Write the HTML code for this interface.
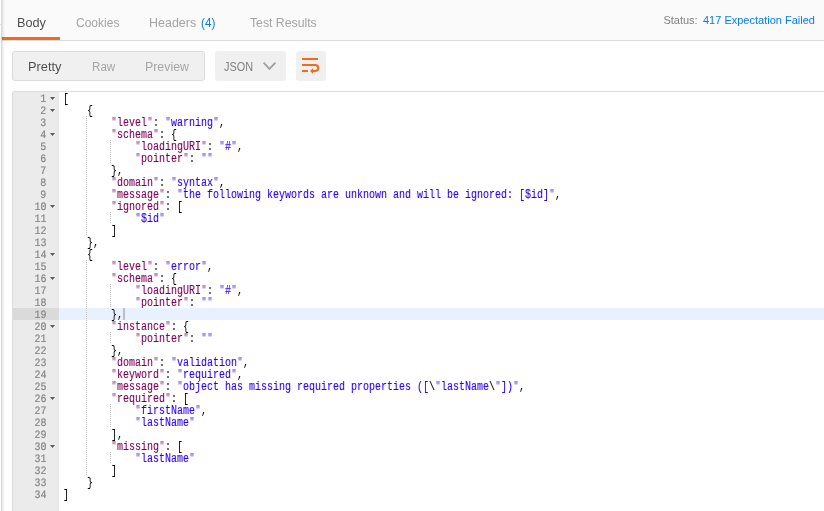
<!DOCTYPE html>
<html><head><meta charset="utf-8"><title>Response</title>
<style>
*{box-sizing:border-box;margin:0;padding:0}
html,body{width:824px;height:511px;overflow:hidden;background:#fff}
body{position:relative;font-family:"Liberation Sans","DejaVu Sans",sans-serif;font-size:13px;color:#808080}
.edge{position:absolute;left:0;top:0;width:6px;height:511px;background:linear-gradient(90deg,#fff 0,#fff 1px,rgba(0,0,0,.15) 1px,rgba(0,0,0,.15) 2px,rgba(0,0,0,.09) 2px,rgba(0,0,0,.09) 3px,rgba(0,0,0,.04) 3px,rgba(0,0,0,.04) 4px,rgba(0,0,0,.015) 4px,rgba(0,0,0,.015) 5px,transparent 5px)}
.edge i{position:absolute;left:0;top:24px;width:1px;height:1px;background:#e4e4e4}
.tabs{position:absolute;left:2px;top:0;width:822px;height:41px;background:#fafafa;border-bottom:1px solid #dddddd}
.tab{position:absolute;top:15px;transform-origin:0 0;line-height:16px;font-size:13px;color:#a4a4a4;white-space:nowrap}
.tab.on{color:#505050}
.tab i{font-style:normal;color:#097bed}
.bar{position:absolute;left:0;top:37px;width:58px;height:3px;background:#f26b1d}
.status{position:absolute;top:13px;line-height:14px;font-size:11px;white-space:nowrap}
.status.v{color:#097bed}
.grp{position:absolute;left:12px;top:51px;width:193px;height:30px;background:#f0f0f0;border:1px solid #dcdcdc;border-radius:3px}
.grp span{position:absolute;transform-origin:0 0;top:7px;line-height:16px;font-size:12px;color:#a6a6a6;white-space:nowrap}
.grp span.on{color:#505050}
.dd{position:absolute;left:215px;top:51px;width:71px;height:30px;background:#f0f0f0;border-radius:3px}
.dd span{position:absolute;left:9.4px;top:8px;line-height:16px;font-size:12px;color:#808080;transform:scaleX(.906);transform-origin:0 0}
.dd svg{position:absolute;left:47px;top:9.6px}
.wrap{position:absolute;left:296px;top:51px;width:30px;height:30px;background:#f0f0f0;border-radius:3px}
.wrap svg{position:absolute;left:0;top:0}
.ed{position:absolute;left:12px;top:91px;width:812px;height:420px;border-top:1px solid #dddddd;border-left:1px solid #dddddd;border-top-left-radius:3px;overflow:hidden;background:#fff}
.gut{position:absolute;left:0;top:0;width:46px;height:420px;background:#ebebeb}
.g{position:relative;height:12px;line-height:12px;font-family:"Liberation Mono","DejaVu Sans Mono",monospace;font-size:12px;color:#848484}
.g.act{background:#dadada}
.g .n{position:absolute;right:13px;top:.5px;display:inline-block;text-rendering:geometricPrecision;-webkit-text-stroke:.2px currentColor;transform:scale(.83333,.95);transform-origin:100% 10px;white-space:pre}
.g b{position:absolute;left:37px;top:5px;width:5px;height:3px;background:#5a5a5a;clip-path:polygon(0 0,100% 0,50% 100%)}
.code{position:absolute;left:46px;top:0;width:766px;height:420px}
.l{position:relative;height:12px;line-height:12px;padding-left:4px;font-family:"Liberation Mono","DejaVu Sans Mono",monospace;font-size:12px;color:#000;white-space:pre}
.l.act{background:#e8f2fe}
.l>span{position:relative;top:1px;display:inline-block;transform:scaleX(.83333);transform-origin:0 10px;white-space:pre;vertical-align:top}
.l u{position:absolute;top:0;width:1px;height:12px;margin-left:4px;text-decoration:none;background:repeating-linear-gradient(180deg,#bfbfbf 0,#bfbfbf 1px,transparent 1px,transparent 2px)}
k{color:#7f0055}
s{color:#2a00ff;text-decoration:none}
e{color:#000}
.cur{position:absolute;left:64px;top:0;width:2px;height:12px;background:rgba(0,0,0,.21)}

.tabs,.grp,.dd,.gut,.code{will-change:transform}
k,s,e{-webkit-text-stroke:.12px currentColor}
.l b{display:inline-block;width:7.2px;font-size:10px;font-weight:normal;text-align:center;position:relative;top:-1.5px;opacity:.8}

</style></head><body>
<div class="tabs">
<div class="bar"></div>
<div class="tab on" style="left:14.9px;transform:scaleX(.975)">Body</div>
<div class="tab" style="left:73.9px;transform:scaleX(.925)">Cookies</div>
<div class="tab" style="left:146.7px;transform:scaleX(.96)">Headers</div>
<div class="tab" style="left:198.7px;transform:scaleX(.90)"><i>(4)</i></div>
<div class="tab" style="left:248.3px;transform:scaleX(.942)">Test Results</div>
<div class="status" style="left:661.4px">Status:</div>
<div class="status v" style="left:701px">417 Expectation Failed</div>
</div>
<div class="grp"><span class="on" style="left:15px;transform:scaleX(1.065)">Pretty</span><span style="left:78.8px;transform:scaleX(.968)">Raw</span><span style="left:132px;transform:scaleX(1.03)">Preview</span></div>
<div class="dd"><span>JSON</span><svg width="16" height="10" viewBox="0 0 16 10"><path d="M1.6 1.7 L7.5 7.9 L13.4 1.7" fill="none" stroke="#a0a0a0" stroke-width="1.8"/></svg></div>
<div class="wrap"><svg width="30" height="30" viewBox="0 0 30 30"><path d="M6 8H22M6 14H19.2A3 3 0 0 1 19.2 20H16.5M6 20H12" fill="none" stroke="#f26b1d" stroke-width="2"/><path d="M14 20 L17 17.2 L17 22.8Z" fill="#f26b1d"/></svg></div>
<div class="edge"><i></i></div>

<div class="ed">
<div class="gut">
<div class="g"><span class="n">1</span><b></b></div>
<div class="g"><span class="n">2</span><b></b></div>
<div class="g"><span class="n">3</span></div>
<div class="g"><span class="n">4</span><b></b></div>
<div class="g"><span class="n">5</span></div>
<div class="g"><span class="n">6</span></div>
<div class="g"><span class="n">7</span></div>
<div class="g"><span class="n">8</span></div>
<div class="g"><span class="n">9</span></div>
<div class="g"><span class="n">10</span><b></b></div>
<div class="g"><span class="n">11</span></div>
<div class="g"><span class="n">12</span></div>
<div class="g"><span class="n">13</span></div>
<div class="g"><span class="n">14</span><b></b></div>
<div class="g"><span class="n">15</span></div>
<div class="g"><span class="n">16</span><b></b></div>
<div class="g"><span class="n">17</span></div>
<div class="g"><span class="n">18</span></div>
<div class="g act"><span class="n">19</span></div>
<div class="g"><span class="n">20</span><b></b></div>
<div class="g"><span class="n">21</span></div>
<div class="g"><span class="n">22</span></div>
<div class="g"><span class="n">23</span></div>
<div class="g"><span class="n">24</span></div>
<div class="g"><span class="n">25</span></div>
<div class="g"><span class="n">26</span><b></b></div>
<div class="g"><span class="n">27</span></div>
<div class="g"><span class="n">28</span></div>
<div class="g"><span class="n">29</span></div>
<div class="g"><span class="n">30</span><b></b></div>
<div class="g"><span class="n">31</span></div>
<div class="g"><span class="n">32</span></div>
<div class="g"><span class="n">33</span></div>
<div class="g"><span class="n">34</span></div>
</div>
<div class="code">
<div class="l"><span>[</span></div>
<div class="l"><span>    {</span></div>
<div class="l"><u style="left:23px"></u><span>        <k><b>"</b>level<b>"</b></k>: <s><b>"</b>warning<b>"</b></s>,</span></div>
<div class="l"><u style="left:23px"></u><span>        <k><b>"</b>schema<b>"</b></k>: {</span></div>
<div class="l"><u style="left:23px"></u><u style="left:47px"></u><span>            <k><b>"</b>loadingURI<b>"</b></k>: <s><b>"</b>#<b>"</b></s>,</span></div>
<div class="l"><u style="left:23px"></u><u style="left:47px"></u><span>            <k><b>"</b>pointer<b>"</b></k>: <s><b>"</b><b>"</b></s></span></div>
<div class="l"><u style="left:23px"></u><span>        },</span></div>
<div class="l"><u style="left:23px"></u><span>        <k><b>"</b>domain<b>"</b></k>: <s><b>"</b>syntax<b>"</b></s>,</span></div>
<div class="l"><u style="left:23px"></u><span>        <k><b>"</b>message<b>"</b></k>: <s><b>"</b>the following keywords are unknown and will be ignored: [$id]<b>"</b></s>,</span></div>
<div class="l"><u style="left:23px"></u><span>        <k><b>"</b>ignored<b>"</b></k>: [</span></div>
<div class="l"><u style="left:23px"></u><u style="left:47px"></u><span>            <s><b>"</b>$id<b>"</b></s></span></div>
<div class="l"><u style="left:23px"></u><span>        ]</span></div>
<div class="l"><span>    },</span></div>
<div class="l"><span>    {</span></div>
<div class="l"><u style="left:23px"></u><span>        <k><b>"</b>level<b>"</b></k>: <s><b>"</b>error<b>"</b></s>,</span></div>
<div class="l"><u style="left:23px"></u><span>        <k><b>"</b>schema<b>"</b></k>: {</span></div>
<div class="l"><u style="left:23px"></u><u style="left:47px"></u><span>            <k><b>"</b>loadingURI<b>"</b></k>: <s><b>"</b>#<b>"</b></s>,</span></div>
<div class="l"><u style="left:23px"></u><u style="left:47px"></u><span>            <k><b>"</b>pointer<b>"</b></k>: <s><b>"</b><b>"</b></s></span></div>
<div class="l act"><u style="left:23px"></u><span>        },</span><i class="cur"></i></div>
<div class="l"><u style="left:23px"></u><span>        <k><b>"</b>instance<b>"</b></k>: {</span></div>
<div class="l"><u style="left:23px"></u><u style="left:47px"></u><span>            <k><b>"</b>pointer<b>"</b></k>: <s><b>"</b><b>"</b></s></span></div>
<div class="l"><u style="left:23px"></u><span>        },</span></div>
<div class="l"><u style="left:23px"></u><span>        <k><b>"</b>domain<b>"</b></k>: <s><b>"</b>validation<b>"</b></s>,</span></div>
<div class="l"><u style="left:23px"></u><span>        <k><b>"</b>keyword<b>"</b></k>: <s><b>"</b>required<b>"</b></s>,</span></div>
<div class="l"><u style="left:23px"></u><span>        <k><b>"</b>message<b>"</b></k>: <s><b>"</b>object has missing required properties ([</s><e>\</e><s><b>"</b>lastName</s><e>\</e><s><b>"</b>])<b>"</b></s>,</span></div>
<div class="l"><u style="left:23px"></u><span>        <k><b>"</b>required<b>"</b></k>: [</span></div>
<div class="l"><u style="left:23px"></u><u style="left:47px"></u><span>            <s><b>"</b>firstName<b>"</b></s>,</span></div>
<div class="l"><u style="left:23px"></u><u style="left:47px"></u><span>            <s><b>"</b>lastName<b>"</b></s></span></div>
<div class="l"><u style="left:23px"></u><span>        ],</span></div>
<div class="l"><u style="left:23px"></u><span>        <k><b>"</b>missing<b>"</b></k>: [</span></div>
<div class="l"><u style="left:23px"></u><u style="left:47px"></u><span>            <s><b>"</b>lastName<b>"</b></s></span></div>
<div class="l"><u style="left:23px"></u><span>        ]</span></div>
<div class="l"><span>    }</span></div>
<div class="l"><span>]</span></div>
</div>
</div>
</body></html>
